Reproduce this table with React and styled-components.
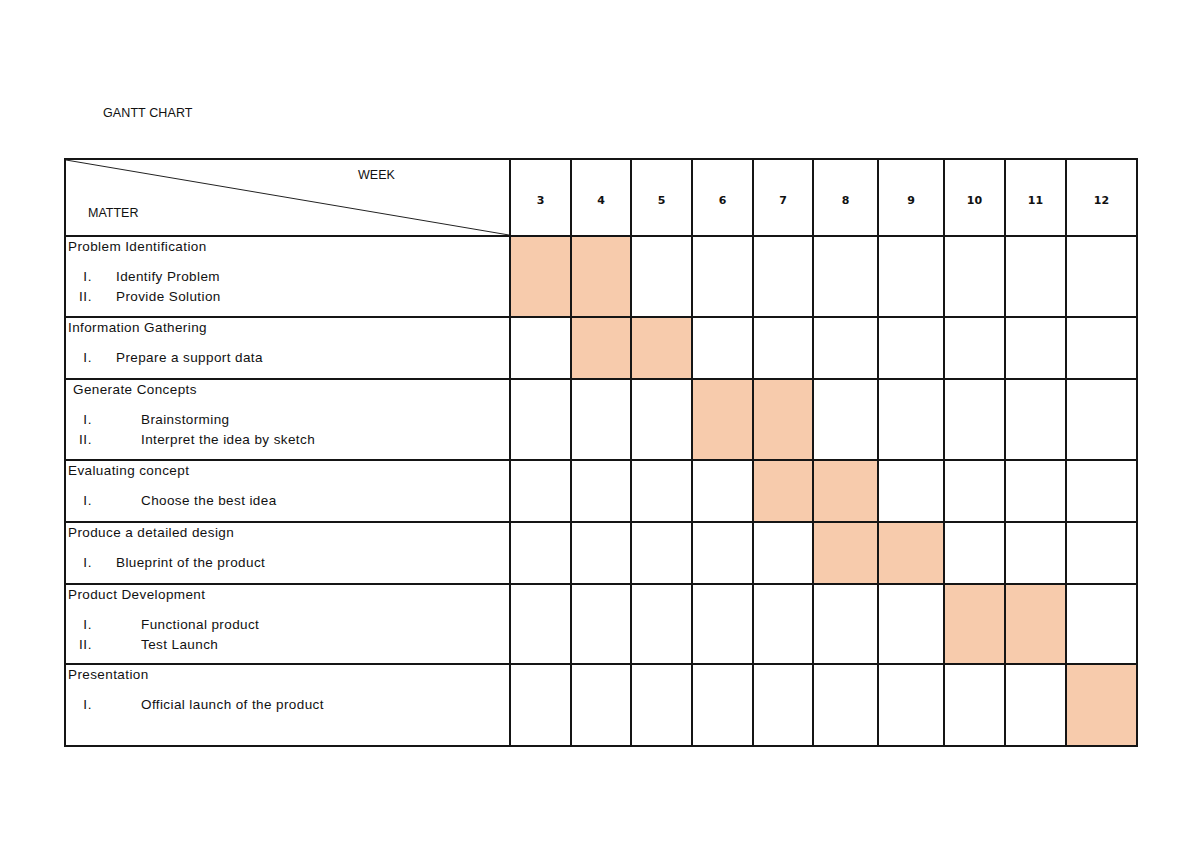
import React from 'react';
import styled, { createGlobalStyle } from 'styled-components';

const GlobalStyle = createGlobalStyle`
  html, body {
    margin: 0;
    padding: 0;
    background: #ffffff;
  }
  body {
    font-family: "Liberation Sans", Arial, sans-serif;
    color: #111;
  }
`;

const WEEKS = [3, 4, 5, 6, 7, 8, 9, 10, 11, 12];

const TASKS = [
  {
    title: 'Problem Identification',
    items: ['Identify Problem', 'Provide Solution'],
    weeks: [3, 4],
  },
  {
    title: 'Information Gathering',
    items: ['Prepare a support data'],
    weeks: [4, 5],
  },
  {
    title: 'Generate Concepts',
    items: ['Brainstorming', 'Interpret the idea by sketch'],
    weeks: [6, 7],
    wide: true,
    shifted: true,
  },
  {
    title: 'Evaluating concept',
    items: ['Choose the best idea'],
    weeks: [7, 8],
    wide: true,
  },
  {
    title: 'Produce a detailed design',
    items: ['Blueprint of the product'],
    weeks: [8, 9],
  },
  {
    title: 'Product Development',
    items: ['Functional product', 'Test Launch'],
    weeks: [10, 11],
    wide: true,
  },
  {
    title: 'Presentation',
    items: ['Official launch of the product'],
    weeks: [12],
    wide: true,
  },
];

const ROMAN = ['I.', 'II.', 'III.'];

const Page = styled.div`
  width: 1200px;
  height: 849px;
  padding: 106px 0 0 64px;
  box-sizing: border-box;
`;

const Title = styled.div`
  margin-left: 39px;
  font-size: 12.5px;
  line-height: 14px;
  letter-spacing: 0.1px;
`;

const Grid = styled.div`
  margin-top: 38px;
  display: grid;
  grid-template-columns: 443px 59px 58px 59px 59px 58px 63px 64px 59px 59px 69px;
  grid-template-rows: 75px 79px 60px 79px 60px 60px 78px 80px;
  gap: 2px;
  padding: 2px;
  background: #151515;
  width: max-content;
`;

const Corner = styled.div`
  position: relative;
  background: #fff;
  font-size: 12.5px;
`;

const Diagonal = styled.svg`
  position: absolute;
  left: 0;
  top: 0;
  width: 100%;
  height: 100%;
  overflow: visible;
`;

const CornerLabel = styled.span`
  position: absolute;
  left: ${(p) => p.$x}px;
  top: ${(p) => p.$y}px;
  line-height: 14px;
`;

const WeekHead = styled.div`
  background: #fff;
  display: flex;
  align-items: center;
  justify-content: center;
  font-family: "DejaVu Sans", Verdana, sans-serif;
  font-weight: bold;
  font-size: 11px;
  padding-top: 6px;
`;

const Matter = styled.div`
  background: #fff;
  padding: 0 0 0 ${(p) => (p.$shifted ? 7 : 2)}px;
  font-size: 13.5px;
  line-height: 19px;
  letter-spacing: 0.4px;
`;

const TaskTitle = styled.div``;

const ItemList = styled.div`
  margin-top: 11px;

  & > div {
    line-height: 20px;
  }
`;

const Item = styled.div`
  display: flex;
  align-items: baseline;
`;

const Marker = styled.span`
  width: ${(p) => (p.$shifted ? 19 : 24)}px;
  text-align: right;
  flex-shrink: 0;
  letter-spacing: 0.6px;
`;

const ItemText = styled.span`
  margin-left: ${(p) => (p.$wide ? 49 : 24)}px;
`;

const Cell = styled.div`
  background: ${(p) => (p.$on ? '#f7cbac' : '#fff')};
`;

export default function App() {
  return (
    <>
      <GlobalStyle />
      <Page>
        <Title>GANTT CHART</Title>
        <Grid>
          <Corner>
            <Diagonal preserveAspectRatio="none" viewBox="0 0 100 100">
              <line
                x1="0"
                y1="0"
                x2="100"
                y2="100"
                stroke="#222"
                strokeWidth="1"
                vectorEffect="non-scaling-stroke"
              />
            </Diagonal>
            <CornerLabel $x={292} $y={8}>WEEK</CornerLabel>
            <CornerLabel $x={22} $y={46}>MATTER</CornerLabel>
          </Corner>
          {WEEKS.map((w) => (
            <WeekHead key={w}>{w}</WeekHead>
          ))}
          {TASKS.map((t) => (
            <React.Fragment key={t.title}>
              <Matter $shifted={t.shifted}>
                <TaskTitle>{t.title}</TaskTitle>
                <ItemList>
                  {t.items.map((it, i) => (
                    <Item key={it}>
                      <Marker $shifted={t.shifted}>{ROMAN[i]}</Marker>
                      <ItemText $wide={t.wide}>{it}</ItemText>
                    </Item>
                  ))}
                </ItemList>
              </Matter>
              {WEEKS.map((w) => (
                <Cell key={w} $on={t.weeks.includes(w)} />
              ))}
            </React.Fragment>
          ))}
        </Grid>
      </Page>
    </>
  );
}
